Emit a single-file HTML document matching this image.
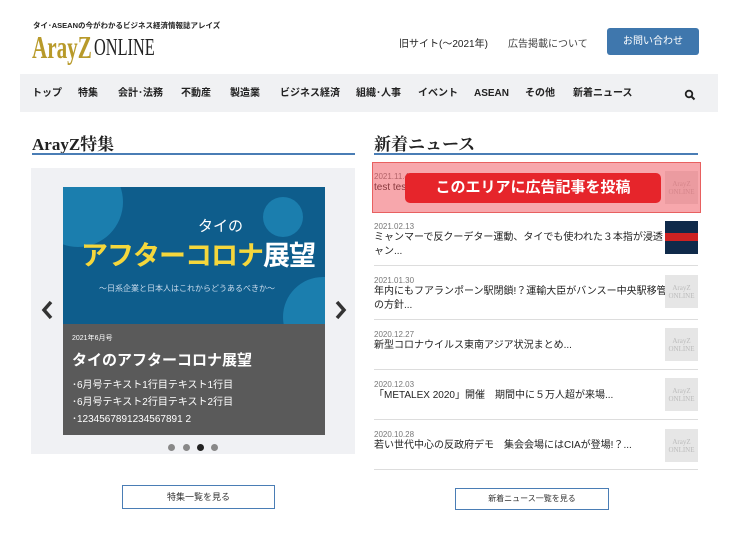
<!DOCTYPE html>
<html><head><meta charset="utf-8"><style>
*{margin:0;padding:0;box-sizing:border-box}
body{width:740px;height:553px;background:#fff;font-family:"Liberation Sans","Noto Sans CJK JP",sans-serif;color:#222;position:relative;overflow:hidden}
.a{position:absolute;white-space:nowrap}
.nav span{position:absolute;top:87px;font-size:10px;line-height:14px;font-weight:bold;color:#222}
.date{font-size:8px;color:#777}
.ttl{font-size:10px;color:#222;line-height:14px}
.th{position:absolute;left:665px;width:33px;height:33px;background:#e6e6e6;color:#bbb;font-family:"Liberation Serif",serif;font-size:7px;text-align:center;line-height:8px;padding-top:9px}
.sep{position:absolute;left:374px;width:324px;height:1px;background:#ddd}
.btn{position:absolute;border:1px solid #4a7db5;font-size:9px;color:#333;text-align:center}
</style></head><body>
<div class="a" style="left:33px;top:20px;font-size:7.5px;font-weight:bold">タイ･ASEANの今がわかるビジネス経済情報誌アレイズ</div>
<div class="a" style="left:32px;top:29px;font-family:'Liberation Serif',serif;font-weight:bold;font-size:32px;color:#b89a2a;transform:scaleX(0.66);transform-origin:left top">ArayZ</div>
<div class="a" style="left:94px;top:35px;font-family:'Liberation Serif',serif;font-size:24px;color:#222;transform:scaleX(0.68);transform-origin:left top">ONLINE</div>
<div class="a" style="left:399px;top:35px;font-size:10px">旧サイト(〜2021年)</div>
<div class="a" style="left:508px;top:35px;font-size:10px;color:#444">広告掲載について</div>
<div class="a" style="left:607px;top:28px;width:92px;height:27px;background:#3f77ad;border-radius:3px;color:#fff;font-size:10px;text-align:center;line-height:27px">お問い合わせ</div>
<div class="a" style="left:20px;top:74px;width:698px;height:38px;background:#f0f1f3"></div>
<div class="nav">
<span style="left:32px">トップ</span><span style="left:78px">特集</span><span style="left:118px">会計･法務</span><span style="left:181px">不動産</span><span style="left:230px">製造業</span><span style="left:280px">ビジネス経済</span><span style="left:356px">組織･人事</span><span style="left:418px">イベント</span><span style="left:474px">ASEAN</span><span style="left:525px">その他</span><span style="left:573px">新着ニュース</span>
</div>
<svg class="a" style="left:684px;top:89px" width="12" height="12" viewBox="0 0 12 12"><circle cx="5" cy="5" r="3.3" fill="none" stroke="#222" stroke-width="1.8"/><path d="M7.5 7.5L10.5 10.5" stroke="#222" stroke-width="2"/></svg>

<div class="a" style="left:32px;top:130px;font-family:'Liberation Serif','Noto Serif CJK SC',serif;font-weight:bold;font-size:17px">ArayZ特集</div>
<div class="a" style="left:32px;top:153px;width:323px;height:2px;background:#4a7db5"></div>
<div class="a" style="left:31px;top:168px;width:324px;height:286px;background:#f0f1f4"></div>
<div class="a" style="left:63px;top:187px;width:262px;height:137px;background:#0e5d8c;overflow:hidden">
<div class="a" style="left:-30px;top:-30px;width:90px;height:90px;border-radius:50%;background:#1b7eae"></div>
<div class="a" style="left:200px;top:10px;width:40px;height:40px;border-radius:50%;background:#1b7eae"></div>
<div class="a" style="left:220px;top:90px;width:80px;height:80px;border-radius:50%;background:#1b7eae"></div>
<div class="a" style="left:135px;top:28px;color:#fff;font-size:15px">タイの</div>
<div class="a" style="left:18px;top:47px;color:#f5d73c;font-size:27px;font-weight:bold;letter-spacing:-1px">アフターコロナ<span style="color:#fff">展望</span></div>
<div class="a" style="left:36px;top:96px;color:#cde;font-size:8px">〜日系企業と日本人はこれからどうあるべきか〜</div>
</div>
<div class="a" style="left:63px;top:324px;width:262px;height:111px;background:#5a5a5a;color:#fff">
<div class="a" style="left:9px;top:9px;font-size:7px">2021年6月号</div>
<div class="a" style="left:9px;top:25px;font-size:15px;font-weight:bold">タイのアフターコロナ展望</div>
<div class="a" style="left:9px;top:53px;font-size:10px;line-height:17px">･6月号テキスト1行目テキスト1行目<br>･6月号テキスト2行目テキスト2行目<br>･1234567891234567891 2</div>
</div>
<svg class="a" style="left:40px;top:300px" width="14" height="20" viewBox="0 0 14 20"><path d="M11 2L4 10L11 18" fill="none" stroke="#333" stroke-width="3.5"/></svg>
<svg class="a" style="left:334px;top:300px" width="14" height="20" viewBox="0 0 14 20"><path d="M3 2L10 10L3 18" fill="none" stroke="#333" stroke-width="3.5"/></svg>
<div class="a" style="left:168px;top:444px;width:7px;height:7px;border-radius:50%;background:#888"></div>
<div class="a" style="left:183px;top:444px;width:7px;height:7px;border-radius:50%;background:#888"></div>
<div class="a" style="left:197px;top:444px;width:7px;height:7px;border-radius:50%;background:#222"></div>
<div class="a" style="left:211px;top:444px;width:7px;height:7px;border-radius:50%;background:#888"></div>
<div class="btn" style="left:122px;top:485px;width:153px;height:24px;line-height:22px">特集一覧を見る</div>

<div class="a" style="left:374px;top:130px;font-family:'Liberation Serif','Noto Serif CJK SC',serif;font-weight:bold;font-size:17px">新着ニュース</div>
<div class="a" style="left:374px;top:153px;width:324px;height:2px;background:#4a7db5"></div>
<div class="a" style="left:374px;top:172px" ><div class="date">2021.11.4</div><div class="ttl">test test</div></div>
<div class="th" style="top:171px">ArayZ<br>ONLINE</div>
<div class="a" style="left:372px;top:162px;width:329px;height:51px;background:rgba(240,80,90,0.5);border:1px solid #e86060"></div>
<div class="a" style="left:405px;top:173px;width:256px;height:30px;background:#e6252b;border-radius:5px;color:#fff;font-size:15px;font-weight:bold;text-align:center;line-height:30px">このエリアに広告記事を投稿</div>

<div class="a" style="left:374px;top:222px"><div class="date">2021.02.13</div><div class="ttl">ミャンマーで反クーデター運動、タイでも使われた３本指が浸透　ミ<br>ャン...</div></div>
<div class="a" style="left:665px;top:221px;width:33px;height:33px;background:#0f2a4a"><div style="margin-top:12px;height:8px;background:#c22"></div></div>
<div class="sep" style="top:265px"></div>
<div class="a" style="left:374px;top:276px"><div class="date">2021.01.30</div><div class="ttl">年内にもフアランポーン駅閉鎖!？運輸大臣がバンスー中央駅移管<br>の方針...</div></div>
<div class="th" style="top:275px">ArayZ<br>ONLINE</div>
<div class="sep" style="top:319px"></div>
<div class="a" style="left:374px;top:330px"><div class="date">2020.12.27</div><div class="ttl">新型コロナウイルス東南アジア状況まとめ...</div></div>
<div class="th" style="top:328px">ArayZ<br>ONLINE</div>
<div class="sep" style="top:369px"></div>
<div class="a" style="left:374px;top:380px"><div class="date">2020.12.03</div><div class="ttl">「METALEX 2020」開催　期間中に５万人超が来場...</div></div>
<div class="th" style="top:378px">ArayZ<br>ONLINE</div>
<div class="sep" style="top:419px"></div>
<div class="a" style="left:374px;top:430px"><div class="date">2020.10.28</div><div class="ttl">若い世代中心の反政府デモ　集会会場にはCIAが登場!？...</div></div>
<div class="th" style="top:429px">ArayZ<br>ONLINE</div>
<div class="sep" style="top:469px"></div>
<div class="btn" style="left:455px;top:488px;width:154px;height:22px;line-height:20px;font-size:8px">新着ニュース一覧を見る</div>
</body></html>
